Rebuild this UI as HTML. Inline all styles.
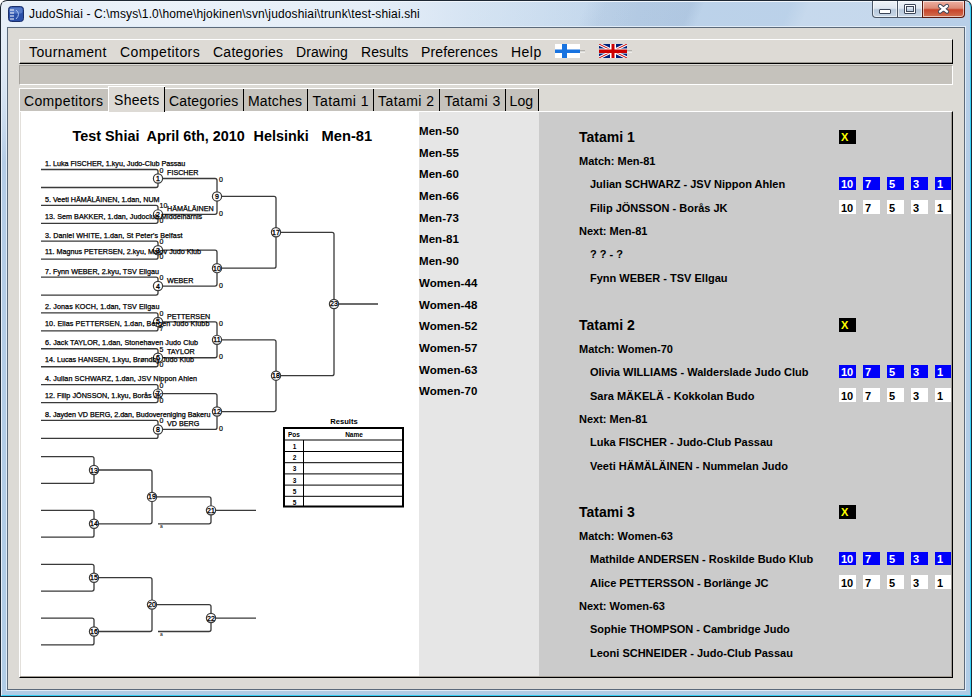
<!DOCTYPE html>
<html><head><meta charset="utf-8">
<style>
*{box-sizing:border-box}
html,body{margin:0;padding:0}
body{width:972px;height:697px;overflow:hidden;position:relative;background:#fff;font-family:"Liberation Sans",sans-serif}
.a{position:absolute}
.t{position:absolute;white-space:pre;line-height:1}
#frame{left:0;top:0;width:972px;height:697px;background:#1d2733;border-radius:7px 7px 0 0}
#frameIn{left:1px;top:1px;width:970px;height:695px;border-radius:6px 6px 0 0;border-left:1px solid #e6eef8;border-top:1px solid #f0f5fb;border-right:1px solid #36cff5;border-bottom:1px solid #36cff5;
 background:linear-gradient(180deg,rgba(255,255,255,0) 0px,rgba(255,255,255,0) 30px,rgba(180,204,230,1) 160px,rgba(176,204,230,1) 100%) ,linear-gradient(90deg,#d9e6f3 0%,#dae6f3 38%,#c8dbee 48%,#bdd3ea 65%,#b8cfe8 100%)}
#titleL{left:2px;top:2px;width:760px;height:220px;background:radial-gradient(ellipse 480px 170px at 160px 0px,rgba(238,244,251,.85) 0%,rgba(238,244,251,.45) 55%,rgba(238,244,251,0) 100%)}
#streaks{left:560px;top:2px;width:320px;height:25px;
 background:linear-gradient(112deg,transparent 0%,transparent 8%,rgba(110,140,180,.10) 14%,rgba(110,140,180,.16) 40%,transparent 44%,transparent 70%,rgba(255,255,255,.18) 76%,rgba(255,255,255,.18) 100%)}
#clientHi{left:6px;top:26px;width:960px;height:665px;border:1px solid #e0ecf8}
#client{left:7px;top:27px;width:958px;height:663px;border:1px solid #5c6a7a;background:#dcdad5}
.menu{font-size:14px;color:#000}
.tab{position:absolute;background:#c5c2bc;border-top:1px solid #fff}
.tab::after{content:"";position:absolute;right:0;top:0;width:1px;bottom:0;background:#000}
.tab.nr::after{display:none}
.tab span{position:absolute;font-size:14px;white-space:pre;line-height:1}
.cat{font-size:11.5px;font-weight:bold;color:#000;letter-spacing:0.05px}
.tt{font-size:14px;font-weight:bold;color:#000}
.tm{font-size:11px;font-weight:bold;color:#000}
.box{position:absolute;width:17px;height:13px;font-size:11px;font-weight:bold;line-height:15px;padding-left:2px;white-space:pre}
.bl{background:#0000fa;color:#fff}
.wh{background:#fff;color:#000;line-height:17px}
.xb{position:absolute;width:17px;height:14px;background:#000;color:#ffff00;font-size:11px;font-weight:bold;line-height:15px;padding-left:2px}
.tbtn{position:absolute;top:1px;height:17px;border:1px solid #4a5666;border-top:none;background:linear-gradient(#eef3f8 0%,#dfe7f0 45%,#b8c9dc 55%,#c9d8e8 100%);box-shadow:inset 0 0 0 1px rgba(255,255,255,.6)}
</style></head><body>
<div id="frame" class="a"></div>
<div id="frameIn" class="a"></div>
<div id="titleL" class="a"></div>
<div id="streaks" class="a"></div>
<div id="clientHi" class="a"></div>
<!-- title bar -->
<svg class="a" style="left:7px;top:5px" width="18" height="18" viewBox="0 0 18 18">
 <rect x="1.5" y="1.5" width="15" height="15" rx="3" fill="#2a4fa8" stroke="#1a2f6a"/>
 <rect x="2.5" y="2.5" width="13" height="6" rx="2" fill="#6f93d8" opacity=".6"/>
 <path d="M3,5 H7 M3,8 H7 M3,11 H7 M3,14 H7" stroke="#fff" stroke-width="1.2"/>
 <path d="M9,5 q5,4 0,9" stroke="#a9c1ee" stroke-width="1" fill="none"/>
</svg>
<div class="t" style="left:29px;top:8px;font-size:12px;letter-spacing:0.14px;color:#000">JudoShiai - C:\msys\1.0\home\hjokinen\svn\judoshiai\trunk\test-shiai.shi</div>
<!-- title buttons -->
<div class="tbtn" style="left:872px;width:26px;border-radius:0 0 0 4px"></div>
<div class="tbtn" style="left:897px;width:26px"></div>
<div class="tbtn" style="left:922px;width:43px;border-radius:0 0 4px 0;border-color:#5a1a10;background:linear-gradient(#eeb0a2 0%,#dc8a76 45%,#c8442a 55%,#d07050 100%)"></div>
<div class="a" style="left:879px;top:9px;width:12px;height:5px;background:#fff;border:1px solid #3c4658;border-radius:1px"></div>
<div class="a" style="left:904px;top:4px;width:12px;height:10px;background:transparent;border:1px solid #3c4658;border-radius:1px;box-shadow:inset 0 0 0 1px #fff, inset 0 0 0 2px #3c4658"></div>
<svg class="a" style="left:936px;top:2px" width="16" height="14" viewBox="0 0 16 14">
 <path d="M4,4 L11,9.6 M11,4 L4,9.6" stroke="#3c4658" stroke-width="4.2" stroke-linecap="round"/>
 <path d="M4,4 L11,9.6 M11,4 L4,9.6" stroke="#fff" stroke-width="2.4" stroke-linecap="round"/>
</svg>

<div id="client" class="a"></div>

<!-- menubar -->
<div class="a" style="left:19px;top:39px;width:934px;height:25px;background:#dddad5;border-top:1px solid #fff;border-left:1px solid #fff;border-right:1px solid #000;border-bottom:1px solid #000"></div>
<div class="a" style="left:20px;top:62px;width:932px;height:1px;background:#9d9a93"></div>
<div class="t menu" style="left:29px;top:45px;letter-spacing:0.39px">Tournament</div>
<div class="t menu" style="left:120px;top:45px;letter-spacing:0.42px">Competitors</div>
<div class="t menu" style="left:213px;top:45px;letter-spacing:0.26px">Categories</div>
<div class="t menu" style="left:296px;top:45px;letter-spacing:0.07px">Drawing</div>
<div class="t menu" style="left:361px;top:45px;letter-spacing:0.08px">Results</div>
<div class="t menu" style="left:421px;top:45px;letter-spacing:0.13px">Preferences</div>
<div class="t menu" style="left:511px;top:45px;letter-spacing:0.47px">Help</div>
<!-- flags -->
<svg class="a" style="left:555px;top:44px" width="31" height="14" viewBox="0 0 31 14">
 <rect x="0" y="0" width="25" height="14" fill="#fff"/>
 <rect x="7" y="0" width="5" height="14" fill="#1873e0"/>
 <rect x="0" y="5.5" width="25" height="3.5" fill="#1873e0"/>
 <rect x="25" y="6.5" width="5" height="1" fill="#8c8a86"/>
 <rect x="25" y="7.5" width="5" height="1" fill="#fff"/>
</svg>
<svg class="a" style="left:599px;top:44px" width="34" height="14" viewBox="0 0 34 14">
 <defs><clipPath id="uk"><rect x="0" y="0" width="28" height="14"/></clipPath></defs>
 <g clip-path="url(#uk)">
 <rect x="0" y="0" width="28" height="14" fill="#00207a"/>
 <path d="M0,0 L28,14 M28,0 L0,14" stroke="#fff" stroke-width="3"/>
 <path d="M0,0 L28,14 M28,0 L0,14" stroke="#cc0000" stroke-width="1"/>
 <rect x="11" y="0" width="6" height="14" fill="#fff"/>
 <rect x="0" y="4.5" width="28" height="5" fill="#fff"/>
 <rect x="12.5" y="0" width="3" height="14" fill="#cc0000"/>
 <rect x="0" y="5.5" width="28" height="3.5" fill="#cc0000"/>
 </g>
 <rect x="28" y="6.5" width="5" height="1" fill="#8c8a86"/>
 <rect x="28" y="7.5" width="5" height="1" fill="#fff"/>
</svg>

<!-- toolbar gray -->
<div class="a" style="left:19px;top:65px;width:934px;height:20px;background:#c5c2bc;border-top:1px solid #a5a29c;border-left:1px solid #a5a29c;border-right:1px solid #fff;border-bottom:1px solid #fff"></div>

<!-- notebook page -->
<div class="a" style="left:19px;top:111px;width:934px;height:567px;background:#fff;border-top:1px solid #fff;border-left:1px solid #fff;border-right:1px solid #000;border-bottom:1px solid #000"></div>
<div class="a" style="left:20px;top:112px;width:1px;height:564px;background:#e3e0db"></div>
<div class="a" style="left:20px;top:676px;width:932px;height:1px;background:#a29d95"></div>
<div class="a" style="left:419px;top:112px;width:120px;height:564px;background:#e6e6e6"></div>
<div class="a" style="left:539px;top:112px;width:413px;height:564px;background:#cbcbcb"></div>

<!-- tabs -->
<div class="tab nr" style="left:19px;top:88px;width:89px;height:23px;border-left:1px solid #fff"><span style="left:4px;top:5px;letter-spacing:0.35px">Competitors</span></div>
<div class="tab" style="left:165px;top:88px;width:79px;height:23px"><span style="left:4px;top:5px;letter-spacing:0.18px">Categories</span></div>
<div class="tab" style="left:244px;top:88px;width:64px;height:23px"><span style="left:4px;top:5px;letter-spacing:0.17px">Matches</span></div>
<div class="tab" style="left:308px;top:88px;width:66px;height:23px"><span style="left:4.5px;top:5px;letter-spacing:0.43px">Tatami 1</span></div>
<div class="tab" style="left:374px;top:88px;width:66px;height:23px"><span style="left:4px;top:5px;letter-spacing:0.43px">Tatami 2</span></div>
<div class="tab" style="left:440px;top:88px;width:66px;height:23px"><span style="left:4.5px;top:5px;letter-spacing:0.40px">Tatami 3</span></div>
<div class="tab" style="left:506px;top:88px;width:33px;height:23px"><span style="left:3.5px;top:5px;letter-spacing:0.1px">Log</span></div>
<div class="tab" style="left:108px;top:86px;width:57px;height:26px;background:#dddad5;border-left:1px solid #fff"><span style="left:5px;top:6px;letter-spacing:0.32px">Sheets</span></div>

<!-- SHEET -->
<div id="sheet"><svg id="sh" class="a" style="left:0;top:0" width="420" height="697" viewBox="0 0 420 697"><g transform="translate(0,0.5)"><style>#sh path{fill:none;stroke:#3a3a3a;stroke-width:1.3}#sh .c{fill:#fff;stroke:#3a3a3a;stroke-width:1.2}#sh .cn{font:7px "Liberation Sans",sans-serif;fill:#000;stroke:#000;stroke-width:0.3}#sh .s{font:7.2px "Liberation Sans",sans-serif;fill:#000;stroke:#000;stroke-width:0.25}#sh .sc{font:7px "Liberation Sans",sans-serif;fill:#000;stroke:#000;stroke-width:0.2}#sh .tiny{font:5px "Liberation Sans",sans-serif;fill:#000}#sh .rt{font:bold 7.6px "Liberation Sans",sans-serif;fill:#000}#sh .th{font:bold 6.5px "Liberation Sans",sans-serif;fill:#000}#sh .tb{fill:none;stroke:#000;stroke-width:2}#sh .tl{fill:none;stroke:#000;stroke-width:1}</style><text x="72.5" y="140.3" style="font:bold 14.4px 'Liberation Sans',sans-serif">Test Shiai</text><text x="146.5" y="140.3" style="font:bold 14.4px 'Liberation Sans',sans-serif">April 6th, 2010</text><text x="253.5" y="140.3" style="font:bold 14.4px 'Liberation Sans',sans-serif">Helsinki</text><text x="321.5" y="140.3" style="font:bold 14.7px 'Liberation Sans',sans-serif">Men-81</text><path d="M41,169.0 H156 q2,0 2,2 V185.0 q0,2 -2,2 H41"/><path d="M41,204.85 H156 q2,0 2,2 V220.85 q0,2 -2,2 H41"/><path d="M41,240.7 H156 q2,0 2,2 V256.7 q0,2 -2,2 H41"/><path d="M41,276.55 H156 q2,0 2,2 V292.55 q0,2 -2,2 H41"/><path d="M41,312.4 H156 q2,0 2,2 V328.4 q0,2 -2,2 H41"/><path d="M41,348.25 H156 q2,0 2,2 V364.25 q0,2 -2,2 H41"/><path d="M41,384.1 H156 q2,0 2,2 V400.1 q0,2 -2,2 H41"/><path d="M41,419.95 H156 q2,0 2,2 V435.95 q0,2 -2,2 H41"/><path d="M158,178.0 H215 q2,0 2,2 V211.85 q0,2 -2,2 H158"/><path d="M158,249.7 H215 q2,0 2,2 V283.55 q0,2 -2,2 H158"/><path d="M158,321.4 H215 q2,0 2,2 V355.25 q0,2 -2,2 H158"/><path d="M158,393.1 H215 q2,0 2,2 V426.95 q0,2 -2,2 H158"/><path d="M217,195.925 H274 q2,0 2,2 V265.625 q0,2 -2,2 H217"/><path d="M217,339.325 H274 q2,0 2,2 V409.025 q0,2 -2,2 H217"/><path d="M276,231.775 H332 q2,0 2,2 V373.17499999999995 q0,2 -2,2 H276"/><path d="M334,303.47499999999997 H378"/><path d="M41,456.1 H92 q2,0 2,2 V480.9 q0,2 -2,2 H41"/><path d="M41,509.9 H92 q2,0 2,2 V534.6999999999999 q0,2 -2,2 H41"/><path d="M94,469.5 H150 q2,0 2,2 V521.3 q0,2 -2,2 H94"/><path d="M152,496.4 H209 q2,0 2,2 V521.3 q0,2 -2,2 H158"/><path d="M211,509.84999999999997 H256"/><text x="160" y="527.8" class="tiny">a</text><path d="M41,563.8000000000001 H92 q2,0 2,2 V588.6 q0,2 -2,2 H41"/><path d="M41,617.6 H92 q2,0 2,2 V642.4 q0,2 -2,2 H41"/><path d="M94,577.2 H150 q2,0 2,2 V629.0 q0,2 -2,2 H94"/><path d="M152,604.1 H209 q2,0 2,2 V629.0 q0,2 -2,2 H158"/><path d="M211,617.55 H256"/><text x="160" y="635.5" class="tiny">a</text><circle cx="158" cy="178.0" r="4.6" class="c"/><text x="158" y="180.5" class="cn" text-anchor="middle">1</text><circle cx="158" cy="213.85" r="4.6" class="c"/><text x="158" y="216.35" class="cn" text-anchor="middle">2</text><circle cx="158" cy="249.7" r="4.6" class="c"/><text x="158" y="252.2" class="cn" text-anchor="middle">3</text><circle cx="158" cy="285.55" r="4.6" class="c"/><text x="158" y="288.05" class="cn" text-anchor="middle">4</text><circle cx="158" cy="321.4" r="4.6" class="c"/><text x="158" y="323.9" class="cn" text-anchor="middle">5</text><circle cx="158" cy="357.25" r="4.6" class="c"/><text x="158" y="359.75" class="cn" text-anchor="middle">6</text><circle cx="158" cy="393.1" r="4.6" class="c"/><text x="158" y="395.6" class="cn" text-anchor="middle">7</text><circle cx="158" cy="428.95" r="4.6" class="c"/><text x="158" y="431.45" class="cn" text-anchor="middle">8</text><text x="45" y="165.5" class="s" textLength="140.3" lengthAdjust="spacing">1. Luka FISCHER, 1.kyu, Judo-Club Passau</text><text x="45" y="201.35" class="s" textLength="114.6" lengthAdjust="spacing">5. Veeti HÄMÄLÄINEN, 1.dan, NUM</text><text x="45" y="218.04999999999998" class="s" textLength="157.2" lengthAdjust="spacing">13. Sem BAKKER, 1.dan, Judoclub Middelharnis</text><text x="45" y="237.2" class="s" textLength="137.6" lengthAdjust="spacing">3. Daniel WHITE, 1.dan, St Peter&#39;s Belfast</text><text x="45" y="253.89999999999998" class="s" textLength="156.1" lengthAdjust="spacing">11. Magnus PETERSEN, 2.kyu, Malov Judo Klub</text><text x="45" y="273.05" class="s" textLength="114.0" lengthAdjust="spacing">7. Fynn WEBER, 2.kyu, TSV Ellgau</text><text x="45" y="308.9" class="s" textLength="114.4" lengthAdjust="spacing">2. Jonas KOCH, 1.dan, TSV Ellgau</text><text x="45" y="325.59999999999997" class="s" textLength="164.4" lengthAdjust="spacing">10. Elias PETTERSEN, 1.dan, Bergen Judo Klubb</text><text x="45" y="344.75" class="s" textLength="153.1" lengthAdjust="spacing">6. Jack TAYLOR, 1.dan, Stonehaven Judo Club</text><text x="45" y="361.45" class="s" textLength="148.9" lengthAdjust="spacing">14. Lucas HANSEN, 1.kyu, Brøndby Judo Klub</text><text x="45" y="380.6" class="s" textLength="152.0" lengthAdjust="spacing">4. Julian SCHWARZ, 1.dan, JSV Nippon Ahlen</text><text x="45" y="397.3" class="s" textLength="117.0" lengthAdjust="spacing">12. Filip JÖNSSON, 1.kyu, Borås JK</text><text x="45" y="416.45" class="s" textLength="165.4" lengthAdjust="spacing">8. Jayden VD BERG, 2.dan, Budovereniging Bakeru</text><text x="159.5" y="172.0" class="sc">0</text><text x="167" y="174.7" class="s">FISCHER</text><text x="159.5" y="207.85" class="sc">10</text><text x="159.5" y="222.85" class="sc">0</text><text x="167" y="210.54999999999998" class="s">HÄMÄLÄINEN</text><text x="159.5" y="243.7" class="sc">0</text><text x="159.5" y="258.7" class="sc">0</text><text x="159.5" y="279.55" class="sc">0</text><text x="167" y="282.25" class="s">WEBER</text><text x="159.5" y="315.4" class="sc">0</text><text x="159.5" y="330.4" class="sc">7</text><text x="167" y="318.09999999999997" class="s">PETTERSEN</text><text x="159.5" y="351.25" class="sc">5</text><text x="159.5" y="366.25" class="sc">0</text><text x="167" y="353.95" class="s">TAYLOR</text><text x="159.5" y="387.1" class="sc">0</text><text x="159.5" y="402.1" class="sc">0</text><text x="159.5" y="422.95" class="sc">0</text><text x="167" y="425.65" class="s">VD BERG</text><circle cx="217" cy="195.925" r="4.6" class="c"/><text x="217" y="198.425" class="cn" text-anchor="middle">9</text><circle cx="217" cy="267.625" r="4.6" class="c"/><text x="217" y="270.125" class="cn" text-anchor="middle">10</text><circle cx="217" cy="339.325" r="4.6" class="c"/><text x="217" y="341.825" class="cn" text-anchor="middle">11</text><circle cx="217" cy="411.025" r="4.6" class="c"/><text x="217" y="413.525" class="cn" text-anchor="middle">12</text><text x="219" y="181.925" class="sc">0</text><text x="219" y="215.425" class="sc">0</text><text x="219" y="287.125" class="sc">0</text><text x="219" y="325.325" class="sc">0</text><text x="219" y="358.825" class="sc">0</text><text x="219" y="430.525" class="sc">0</text><circle cx="276" cy="231.775" r="4.6" class="c"/><text x="276" y="234.275" class="cn" text-anchor="middle">17</text><circle cx="276" cy="375.17499999999995" r="4.6" class="c"/><text x="276" y="377.67499999999995" class="cn" text-anchor="middle">18</text><circle cx="334" cy="303.47499999999997" r="4.6" class="c"/><text x="334" y="305.97499999999997" class="cn" text-anchor="middle">23</text><circle cx="94" cy="469.5" r="4.6" class="c"/><text x="94" y="472.0" class="cn" text-anchor="middle">13</text><circle cx="94" cy="523.3" r="4.6" class="c"/><text x="94" y="525.8" class="cn" text-anchor="middle">14</text><circle cx="152" cy="496.4" r="4.6" class="c"/><text x="152" y="498.9" class="cn" text-anchor="middle">19</text><circle cx="211" cy="509.84999999999997" r="4.6" class="c"/><text x="211" y="512.3499999999999" class="cn" text-anchor="middle">21</text><circle cx="94" cy="577.2" r="4.6" class="c"/><text x="94" y="579.7" class="cn" text-anchor="middle">15</text><circle cx="94" cy="631.0" r="4.6" class="c"/><text x="94" y="633.5" class="cn" text-anchor="middle">16</text><circle cx="152" cy="604.1" r="4.6" class="c"/><text x="152" y="606.6" class="cn" text-anchor="middle">20</text><circle cx="211" cy="617.55" r="4.6" class="c"/><text x="211" y="620.05" class="cn" text-anchor="middle">22</text><text x="344" y="423" class="rt" text-anchor="middle">Results</text><rect x="284" y="427.5" width="119" height="78.5" class="tb"/><path class="tl" d="M284.5,439.5 H402.5 M284.5,451 H402.5 M284.5,462.2 H402.5 M284.5,473.4 H402.5 M284.5,484.6 H402.5 M284.5,495.8 H402.5 M303.5,439.5 V506.5"/><text x="288" y="436.5" class="th">Pos</text><text x="354" y="436.5" class="th" text-anchor="middle">Name</text><text x="294.5" y="448.5" class="th" text-anchor="middle">1</text><text x="294.5" y="459.7" class="th" text-anchor="middle">2</text><text x="294.5" y="470.9" class="th" text-anchor="middle">3</text><text x="294.5" y="482.1" class="th" text-anchor="middle">3</text><text x="294.5" y="493.3" class="th" text-anchor="middle">5</text><text x="294.5" y="504.5" class="th" text-anchor="middle">5</text></g></svg></div>

<!-- CATS -->
<div id="cats"><div class="t cat" style="left:419px;top:126.1px">Men-50</div><div class="t cat" style="left:419px;top:147.8px">Men-55</div><div class="t cat" style="left:419px;top:169.4px">Men-60</div><div class="t cat" style="left:419px;top:191.1px">Men-66</div><div class="t cat" style="left:419px;top:212.8px">Men-73</div><div class="t cat" style="left:419px;top:234.4px">Men-81</div><div class="t cat" style="left:419px;top:256.1px">Men-90</div><div class="t cat" style="left:419px;top:277.8px">Women-44</div><div class="t cat" style="left:419px;top:299.5px">Women-48</div><div class="t cat" style="left:419px;top:321.1px">Women-52</div><div class="t cat" style="left:419px;top:342.8px">Women-57</div><div class="t cat" style="left:419px;top:364.5px">Women-63</div><div class="t cat" style="left:419px;top:386.1px">Women-70</div></div>

<!-- TATAMI -->
<div id="tatami"><div class="t tt" style="left:579px;top:130px">Tatami 1</div><div class="xb" style="left:839px;top:130px">X</div><div class="t tm" style="left:579px;top:156px">Match: Men-81</div><div class="t tm" style="left:590px;top:179px">Julian SCHWARZ - JSV Nippon Ahlen</div><div class="t tm" style="left:590px;top:203px">Filip JÖNSSON - Borås JK</div><div class="t tm" style="left:579px;top:226px">Next: Men-81</div><div class="t tm" style="left:590px;top:249px">? ? - ?</div><div class="t tm" style="left:590px;top:273px">Fynn WEBER - TSV Ellgau</div><div class="box bl" style="left:839px;top:177px;width:17px">10</div><div class="box wh" style="left:839px;top:200px;width:17px;height:14px">10</div><div class="box bl" style="left:863px;top:177px;width:17px">7</div><div class="box wh" style="left:863px;top:200px;width:17px;height:14px">7</div><div class="box bl" style="left:887px;top:177px;width:17px">5</div><div class="box wh" style="left:887px;top:200px;width:17px;height:14px">5</div><div class="box bl" style="left:911px;top:177px;width:17px">3</div><div class="box wh" style="left:911px;top:200px;width:17px;height:14px">3</div><div class="box bl" style="left:935px;top:177px;width:16px">1</div><div class="box wh" style="left:935px;top:200px;width:16px;height:14px">1</div><div class="t tt" style="left:579px;top:318px">Tatami 2</div><div class="xb" style="left:839px;top:318px">X</div><div class="t tm" style="left:579px;top:344px">Match: Women-70</div><div class="t tm" style="left:590px;top:367px">Olivia WILLIAMS - Walderslade Judo Club</div><div class="t tm" style="left:590px;top:391px">Sara MÄKELÄ - Kokkolan Budo</div><div class="t tm" style="left:579px;top:414px">Next: Men-81</div><div class="t tm" style="left:590px;top:437px">Luka FISCHER - Judo-Club Passau</div><div class="t tm" style="left:590px;top:461px">Veeti HÄMÄLÄINEN - Nummelan Judo</div><div class="box bl" style="left:839px;top:365px;width:17px">10</div><div class="box wh" style="left:839px;top:388px;width:17px;height:14px">10</div><div class="box bl" style="left:863px;top:365px;width:17px">7</div><div class="box wh" style="left:863px;top:388px;width:17px;height:14px">7</div><div class="box bl" style="left:887px;top:365px;width:17px">5</div><div class="box wh" style="left:887px;top:388px;width:17px;height:14px">5</div><div class="box bl" style="left:911px;top:365px;width:17px">3</div><div class="box wh" style="left:911px;top:388px;width:17px;height:14px">3</div><div class="box bl" style="left:935px;top:365px;width:16px">1</div><div class="box wh" style="left:935px;top:388px;width:16px;height:14px">1</div><div class="t tt" style="left:579px;top:505px">Tatami 3</div><div class="xb" style="left:839px;top:505px">X</div><div class="t tm" style="left:579px;top:531px">Match: Women-63</div><div class="t tm" style="left:590px;top:554px">Mathilde ANDERSEN - Roskilde Budo Klub</div><div class="t tm" style="left:590px;top:578px">Alice PETTERSSON - Borlänge JC</div><div class="t tm" style="left:579px;top:601px">Next: Women-63</div><div class="t tm" style="left:590px;top:624px">Sophie THOMPSON - Cambridge Judo</div><div class="t tm" style="left:590px;top:648px">Leoni SCHNEIDER - Judo-Club Passau</div><div class="box bl" style="left:839px;top:552px;width:17px">10</div><div class="box wh" style="left:839px;top:575px;width:17px;height:14px">10</div><div class="box bl" style="left:863px;top:552px;width:17px">7</div><div class="box wh" style="left:863px;top:575px;width:17px;height:14px">7</div><div class="box bl" style="left:887px;top:552px;width:17px">5</div><div class="box wh" style="left:887px;top:575px;width:17px;height:14px">5</div><div class="box bl" style="left:911px;top:552px;width:17px">3</div><div class="box wh" style="left:911px;top:575px;width:17px;height:14px">3</div><div class="box bl" style="left:935px;top:552px;width:16px">1</div><div class="box wh" style="left:935px;top:575px;width:16px;height:14px">1</div></div>
<div class="a" style="left:951px;top:112px;width:1px;height:565px;background:#a29d95"></div>

</body></html>
